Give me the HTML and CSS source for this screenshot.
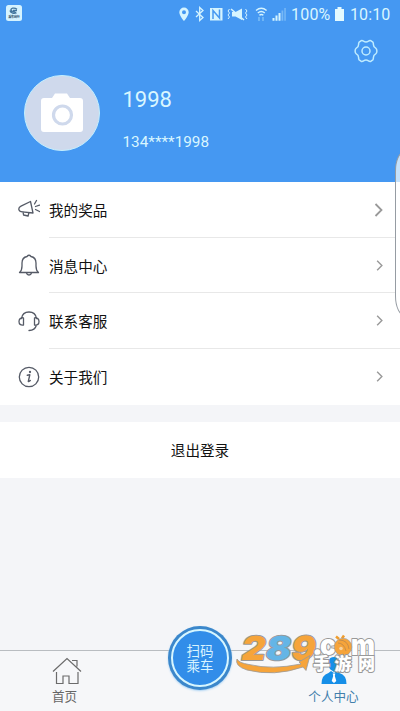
FILE: index.html
```html
<!DOCTYPE html>
<html lang="zh-CN">
<head>
<meta charset="utf-8">
<title>个人中心</title>
<link rel="stylesheet" href="styles.css">
</head>
<body>
<div class="screen">
  <header class="header">
    <div class="status">
      <svg class="app-badge" viewBox="0 0 16 16"><rect width="16" height="16" rx="2.5" fill="#d5f3ff"/><path d="M11 4.2C8 2 4.500 3.500 5 5.200S9 6.500 10 8C7.500 9 4.500 7.500 4 5.500M7 5.500h4" fill="none" stroke="#42759d" stroke-width="1.300"/><text x="2.200" y="12.800" font-size="3.200" font-weight="700" fill="#34546e" textLength="11.600">乘车出行</text></svg>
      <svg class="status-icons" viewBox="0 0 118 16" fill="#d5f4ff">
        <path fill-rule="evenodd" d="M5 1.500a4.700 4.700 0 0 0-4.700 4.700C.3 9.500 5 15 5 15s4.700-5.500 4.700-8.800A4.700 4.700 0 0 0 5 1.500zm0 2.800a2 2 0 1 1 0 4 2 2 0 0 1 0-4z"/>
        <path d="M17 5l7 6.500-3.300 3v-13L24 4.500 17 11" fill="none" stroke="#d5f4ff" stroke-width="1.300"/>
        <path d="M31 2h12.500v12.500H31z"/><path d="M34 13V4.500l6.500 7.500V3.500" fill="none" stroke="#4598f1" stroke-width="1.500"/>
        <path d="M53 6h3.500L63 2.500V14l-6.500-3.500H53z"/><path d="M52 3l13 11" stroke="#d5f4ff" stroke-width="1.600"/><path d="M50.500 3l-1.500 2 1.500 2-1.500 2 1.500 2-1.500 2M66.500 3l1.500 2-1.500 2 1.500 2-1.500 2 1.500 2" fill="none" stroke="#d5f4ff"/>
        <path d="M77 4.500q5.300-4.500 10.600 0M78.800 7q3.500-3 7 0M80.400 9.200q2-1.500 4 0" fill="none" stroke="#d5f4ff" stroke-width="1.400"/><path d="M80 11v4M84 11v4" stroke="#8bc8f7" stroke-width="1.200"/>
        <path d="M93.500 12h2v2.800h-2zM96.500 9.500h2v5.300h-2zM99.500 7h2v7.800h-2z"/><path opacity=".35" d="M102.500 4.500h1.800v10.300h-1.800zM105.300 2h1.500v12.800h-1.500z"/>
      </svg>
      <span class="percent">100%</span>
      <svg class="battery" viewBox="0 0 9 14"><path d="M2.500 0h4v2H9v12H0V2h2.500z" fill="#e4faff"/></svg>
      <span class="clock">10:10</span>
    </div>
    <svg class="settings" viewBox="0 0 24 24" fill="none" stroke="#bfecff" stroke-width="1.500" stroke-linejoin="round"><path d="M7 1.800Q8.300 1.200 9.500 2.200q2.500 1.500 5 0Q15.700 1.200 17 1.800l1.900 1.400Q19.500 4 19.400 5.500q0 2.500 2.300 3.600 1.200.8 1.200 2.900t-1.200 2.900q-2.300 1.100-2.300 3.600.1 1.500-.5 2.300L17 22.200q-1.300.6-2.500-.4-2.500-1.500-5 0-1.200 1-2.500.4l-1.900-1.400q-.6-.8-.5-2.300 0-2.500-2.300-3.600Q1.100 14.100 1.100 12t1.200-2.900Q4.600 8 4.600 5.500 4.500 4 5.100 3.200z"/><circle cx="12" cy="12" r="4"/></svg>
    <div class="profile">
      <div class="avatar"><svg viewBox="0 0 44 40"><path d="M4 5h8l3-4.500h12L30 5h10q3 0 3 3v28q0 3-3 3H4q-3 0-3-3V8q0-3 3-3z" fill="#fff"/><circle cx="22.500" cy="22" r="9" fill="none" stroke="#cfd9ec" stroke-width="3.200"/></svg></div>
      <div class="who"><div class="name">1998</div><div class="phone">134****1998</div></div>
    </div>
  </header>
  <main class="list">
    <div class="row"><svg class="icon" viewBox="0 0 22 22"><path d="M12.500 2.500L3 7.200Q.3 8.500.9 10.700t3.400 2.200L15 14zM5 13l.6 3 4.500 1 .8-3.300M16.500 5l2-3.500M17.500 7.500l4-1.300M17.500 10.500l4 2"/></svg><div class="row-body"><span>我的奖品</span><svg class="chevron big" viewBox="0 0 8 14"><path d="M1 1l6 6-6 6"/></svg></div></div>
    <div class="row"><svg class="icon" viewBox="0 0 22 22"><path d="M1.500 18.500Q4 16.500 4 12V9q0-5.500 5-6.500 2-2.500 4 0 5 1 5 6.500v3q0 4.500 2.500 6.500zM8.500 19q.5 2 2.500 2t2.500-2"/></svg><div class="row-body"><span>消息中心</span><svg class="chevron" viewBox="0 0 8 14"><path d="M1 1l6 6-6 6"/></svg></div></div>
    <div class="row"><svg class="icon" viewBox="0 0 22 22"><path d="M3.500 8.500Q4.500 2 11 2t7.500 6.500M5.500 8v7Q1 15.500 1 11.500T5.500 8zM16.500 8v7q4.500.5 4.500-3.500T16.500 8M18.500 15q-1.500 5.500-7.500 5.500"/></svg><div class="row-body"><span>联系客服</span><svg class="chevron" viewBox="0 0 8 14"><path d="M1 1l6 6-6 6"/></svg></div></div>
    <div class="row"><svg class="icon" viewBox="0 0 22 22"><circle cx="11" cy="11" r="9.700"/><path d="M9.300 9.300l2.500-.5-1.500 6.500q.8.500 2-.7" stroke-width="1.400"/><circle cx="12" cy="6" r=".5"/></svg><div class="row-body"><span>关于我们</span><svg class="chevron" viewBox="0 0 8 14"><path d="M1 1l6 6-6 6"/></svg></div></div>
  </main>
  <div class="logout">退出登录</div>
  <nav class="tabs">
    <div class="tab home"><svg viewBox="0 0 30 28"><path d="M1 14.500L15 1.500l14 13M4.500 15v11.500h6.500V19h6v7.500h9V15M20 3.500h5v6"/></svg><span>首页</span></div>
    <div class="scan-slot"></div>
    <div class="tab mine"><svg viewBox="0 0 30 28"><path d="M9.500 4q1-4 5.500-4t5.500 4q1 5-2 8.500l-3.500 2.500-3.500-2.500q-3-3.500-2-8.500z"/><path d="M2.500 27q0-9 7-11l2.500-2 3 2 3-2 2.500 2q7 2 7 11z"/><path d="M13.700 16.500h2.600l-.5 2.500 1.500 5-2.300 2-2.300-2 1.500-5z" fill="#fff"/></svg><span>个人中心</span></div>
  </nav>
  <div class="scan"><span>扫码<br>乘车</span></div>
  <svg class="watermark" viewBox="0 0 144 42">
    <g transform="translate(0 26) skewX(-10)" class="wm-num"><text class="orange" x="4" textLength="24" lengthAdjust="spacingAndGlyphs">2</text><text class="blue" x="28.500" textLength="25" lengthAdjust="spacingAndGlyphs">8</text><text class="orange" x="54" textLength="24" lengthAdjust="spacingAndGlyphs">9</text></g>
    <path d="M1 25q-2.500 7 10 11 27 7 56-3l3 3.500 4-15-11 6.500 2 2Q36 36 13 30.500 3 29 1 25z" fill="#f6a43a" stroke="#999" stroke-width=".8"/>
    <g class="wm-com"><text x="76" y="21">.</text><text x="84" y="21" textLength="16" lengthAdjust="spacingAndGlyphs">c</text><text x="115" y="21" textLength="24" lengthAdjust="spacingAndGlyphs">m</text></g>
    <path d="M103 5l-3-2.500M106 4.500l2-3" stroke="#ef9d2f" stroke-width="2.500"/><circle cx="107" cy="13" r="8.800" fill="#f6a43a" stroke="#999" stroke-width=".6"/><path d="M102 9q6 0 8 8M103 6q9 0 10 9" fill="none" stroke="#c98e49" stroke-width="1"/><circle cx="105" cy="14.500" r="1.800" fill="#f9d29b"/>
    <g class="wm-cn"><text x="77" y="36">手</text><text x="98.500" y="36">游</text><text x="122" y="36">网</text></g>
  </svg>
  <div class="edge-handle"></div>
</div>
</body>
</html>
```
FILE: styles.css
```css
* { box-sizing: border-box; }
body { margin: 0; }
.screen {
  position: relative;
  width: 400px;
  height: 711px;
  display: flex;
  flex-direction: column;
  overflow: hidden;
  background: #f4f5f8;
  font-family: Roboto, "Noto Sans CJK SC", sans-serif;
  color: #111;
}
svg { display: block; flex: none; }
.header { height: 182px; background: #4598f2; color: #d9f6ff; flex: none; }
.status { height: 28px; display: flex; align-items: center; padding: 0 9px 0 6px; }
.app-badge { width: 16px; height: 16px; margin-top: -2px; }
.status-icons { width: 118px; height: 16px; margin-left: 157px; margin-top: -1px; }
.percent { font-size: 16px; width: 41px; margin-left: -6px; letter-spacing: .2px; white-space: nowrap; }
.battery { width: 9px; height: 14px; margin: -1px 6px 0 3px; }
.clock { font-size: 16px; letter-spacing: .1px; white-space: nowrap; }
.settings { width: 24px; height: 24px; margin: 11px 22px 0 auto; }
.profile { display: flex; margin: 12px 0 0 24px; }
.avatar {
  width: 76px; height: 76px;
  border: 1.5px solid #c3efff;
  border-radius: 50%;
  background: #cfd9ec;
  display: flex; align-items: center; justify-content: center;
}
.avatar svg { width: 44px; height: 40px; }
.who { margin-left: 22.5px; padding-top: 11px; }
.name { font-size: 22px; line-height: 28px; }
.phone { font-size: 15.3px; line-height: 20px; margin-top: 18px; }
.list { height: 223px; background: #fff; display: grid; grid-template-rows: repeat(4, 55.6px); flex: none; }
.row { display: flex; align-items: center; padding-left: 18px; }
.icon { width: 22px; height: 22px; fill: none; stroke: #555a66; stroke-width: 1.3; stroke-linejoin: round; stroke-linecap: round; }
.row-body {
  flex: 1;
  height: 100%;
  margin-left: 9px;
  padding: 1px 17px 0 0;
  display: flex;
  align-items: center;
  justify-content: space-between;
  border-bottom: 1px solid #e8e8e8;
  font-size: 14.6px;
}
.row:last-child .row-body { border: 0; padding-top: 0; }
.chevron { width: 7px; height: 11px; fill: none; stroke: #999; stroke-width: 1.8; }
.chevron.big { width: 9px; height: 14px; }
.logout { height: 56px; margin-top: 17px; background: #fff; font-size: 14.6px; line-height: 58px; text-align: center; flex: none; }
.tabs { height: 61px; margin-top: auto; border-top: 1px solid #b9bdc1; background: #f6f7f9; display: flex; }
.tab { width: 133px; display: flex; flex-direction: column; align-items: center; font-size: 12.6px; line-height: 16px; }
.tab svg { width: 30px; height: 28px; margin-top: 6px; }
.tab span { margin-top: 4px; }
.home { color: #666; padding-right: 4px; }
.home svg { fill: none; stroke: #6b6b6b; stroke-width: 1.2; margin-left: 5px; }
.scan-slot { flex: 1; }
.mine { color: #427fac; }
.mine svg { fill: #168fe8; }
.scan {
  position: absolute;
  left: 168px; top: 626px;
  width: 64px; height: 64px;
  padding: 3px;
  border-radius: 50%;
  background: #3b87cb;
  box-shadow: 0 1px 2px #a9d2f4;
}
.scan span {
  display: block;
  height: 58px;
  padding-top: 13px;
  border: 2px solid #d6f6ff;
  border-radius: 50%;
  background: #318de9;
  color: #d7f3ff;
  font-size: 13.5px;
  line-height: 15px;
  text-align: center;
}
.watermark { position: absolute; left: 236px; top: 634px; width: 144px; height: 42px; overflow: visible; }
.wm-num, .wm-com, .wm-cn { stroke: #999; stroke-linejoin: round; paint-order: stroke; }
.wm-num { font: 900 33px Inter, sans-serif; stroke-width: 2px; }
.orange { fill: #f6a43a; }
.blue { fill: #64b5e6; }
.wm-com, .wm-cn { fill: #fff; }
.wm-com { font: 900 29px Inter, sans-serif; stroke-width: 2px; }
.wm-cn { font: 900 17px "Noto Sans CJK SC", sans-serif; stroke-width: 2px; }
.edge-handle {
  position: absolute;
  left: 395px; top: 151px;
  width: 20px; height: 165px;
  border: 1px solid #969ca3;
  border-radius: 10px / 20px;
  background: linear-gradient(#c5e2fc 30px, #fff 30px);
}
```
